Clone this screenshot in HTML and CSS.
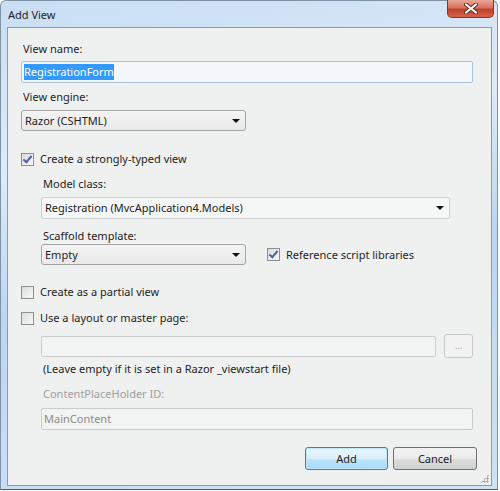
FILE: index.html
```html
<!DOCTYPE html>
<html lang="en">

<head>
    <meta charset="UTF-8">
    <title>Add View</title>
    <link rel="stylesheet" href="styles.css">
</head>

<body>
    <div class="window">

        <div class="titlebar">
            <span class="title">Add View</span>
            <button class="close">
                <svg width="14" height="11" viewBox="0 0 14 11">
                    <path d="M2 1.5 L12 9.5 M12 1.5 L2 9.5" stroke="#5a2a22" stroke-width="4" stroke-linecap="round" />
                    <path d="M2 1.5 L12 9.5 M12 1.5 L2 9.5" stroke="#ffffff" stroke-width="2.2" stroke-linecap="round" />
                </svg>
            </button>
        </div>

        <div class="client">

            <div class="label first">View name:</div>
            <div class="textbox focus name"><span class="selected">RegistrationForm</span></div>

            <div class="label engine">View engine:</div>
            <div class="combo short engineBox">Razor (CSHTML)<span class="arrow"></span></div>

            <label class="check typed">
                <span class="box checked"></span>
                Create a strongly-typed view
            </label>

            <div class="indent">
                <div class="label model">Model class:</div>
                <div class="combo flat modelBox">Registration (MvcApplication4.Models)<span class="arrow"></span></div>

                <div class="label scaffold">Scaffold template:</div>
                <div class="row">
                    <div class="combo short scaffoldBox">Empty<span class="arrow"></span></div>
                    <label class="check refs">
                        <span class="box checked"></span>
                        Reference script libraries
                    </label>
                </div>
            </div>

            <label class="check partial">
                <span class="box"></span>
                Create as a partial view
            </label>

            <label class="check layout">
                <span class="box"></span>
                Use a layout or master page:
            </label>

            <div class="indent">
                <div class="row master">
                    <div class="textbox disabled masterBox"></div>
                    <button class="browse">...</button>
                </div>
                <div class="label hint">(Leave empty if it is set in a Razor _viewstart file)</div>
                <div class="label muted cph">ContentPlaceHolder ID:</div>
                <div class="textbox disabled mainBox">MainContent</div>
            </div>

            <div class="buttons">
                <button class="btn default">Add</button>
                <button class="btn">Cancel</button>
            </div>

            <span class="grip"></span>
        </div>
    </div>
</body>

</html>
```

FILE: styles.css
```css
body {
    margin: 0;
    font-family: 'Noto Sans', 'Open Sans', sans-serif;
    font-size: 11px;
    color: #1e1e1e;
    background: #ffffff;
}

.window {
    width: 498px;
    height: 490px;
    box-sizing: border-box;
    border: 1px solid #7f93a8;
    border-bottom-color: #4d5b6a;
    border-radius: 6px 6px 0 0;
    background: linear-gradient(170deg, #c9def3 0%, #dcebf9 30%, #bcd6f0 55%, #cfe2f6 100%);
}

.titlebar {
    height: 26px;
    display: flex;
    align-items: flex-start;
}

.title {
    margin: 7px 0 0 7px;
    line-height: 14px;
}

.close {
    margin: -1px 3px 0 auto;
    width: 47px;
    height: 18px;
    padding: 0;
    border: 1px solid #8a3224;
    border-top: none;
    border-radius: 0 0 5px 5px;
    background: linear-gradient(#e9a795 0%, #d8735e 45%, #c0412b 55%, #d5624a 100%);
    display: flex;
    align-items: center;
    justify-content: center;
}

.client {
    position: relative;
    margin: 0 6px 0 6px;
    width: 485px;
    height: 459px;
    box-sizing: border-box;
    border: 1px solid #8d9aa8;
    background: #eff0f0;
    padding: 13px 0 0 13px;
}

.label {
    line-height: 16px;
    margin-left: 2px;
}

.first { margin-top: 0; }
.engine { margin-top: 6px; }
.model { margin-top: 9px; }
.scaffold { margin-top: 9px; }
.hint { margin-top: 3px; }
.cph { margin-top: 9px; }

.muted {
    color: #a0a0a0;
}

.textbox {
    box-sizing: border-box;
    height: 22px;
    border: 1px solid #c3c8cd;
    border-radius: 2px;
    background: #f4f5f6;
    line-height: 20px;
    padding-left: 2px;
}

.focus {
    border-color: #a9c3df;
    background: #f3f6fa;
}

.name {
    margin-top: 4px;
    width: 452px;
}

.selected {
    display: inline-block;
    background: #3399ff;
    color: #ffffff;
    line-height: 16px;
}

.disabled {
    border-color: #cbcbcb;
    color: #8c8c8c;
    background: #f2f3f3;
}

.masterBox {
    width: 395px;
    height: 21px;
}

.mainBox {
    margin-top: 6px;
    width: 432px;
}

.combo {
    position: relative;
    box-sizing: border-box;
    height: 21px;
    border: 1px solid #a3a3a3;
    border-radius: 3px;
    background: linear-gradient(#f4f4f4, #e9e9e9);
    line-height: 19px;
    padding-left: 3px;
}

.flat {
    height: 22px;
    line-height: 20px;
    border-color: #cdd0d3;
    border-radius: 2px;
    background: #f5f6f6;
}

.short {
    width: 225px;
}

.engineBox { margin-top: 5px; }

.modelBox {
    margin-top: 5px;
    width: 409px;
}

.scaffoldBox {
    width: 205px;
}

.arrow {
    position: absolute;
    right: 5px;
    top: 8px;
    border-left: 4px solid transparent;
    border-right: 4px solid transparent;
    border-top: 4px solid #111111;
}

.check {
    display: flex;
    align-items: center;
    line-height: 16px;
}

.box {
    width: 13px;
    height: 13px;
    box-sizing: border-box;
    border: 1px solid #8e8f8f;
    background: linear-gradient(135deg, #dcdcdc, #f8f8f8);
    margin-right: 6px;
    position: relative;
}

.checked::after {
    content: "";
    position: absolute;
    left: 3px;
    top: 0px;
    width: 3px;
    height: 7px;
    border-right: 2px solid #4c61a3;
    border-bottom: 2px solid #4c61a3;
    transform: rotate(40deg);
}

.typed { margin-top: 20px; }
.partial { margin-top: 19px; }
.layout { margin-top: 10px; }

.refs {
    margin-left: 21px;
}

.indent {
    margin-left: 20px;
}

.row {
    display: flex;
    align-items: center;
}

.master {
    margin-top: 8px;
}

.browse {
    margin-left: 8px;
    width: 29px;
    height: 24px;
    padding: 0;
    border: 1px solid #c8c8c8;
    border-radius: 3px;
    background: #f2f2f2;
    color: #a0a0a0;
    font-family: inherit;
    font-size: 9px;
    line-height: 16px;
}

.buttons {
    margin-top: 17px;
    padding-right: 14px;
    display: flex;
    justify-content: flex-end;
    gap: 5px;
}

.btn {
    height: 23px;
    width: 84px;
    padding: 0;
    border: 1px solid #707070;
    border-radius: 3px;
    background: linear-gradient(#f2f2f2 0%, #ebebeb 50%, #dddddd 51%, #cfcfcf 100%);
    font-family: inherit;
    font-size: 11px;
    color: #1e1e1e;
}

.default {
    width: 83px;
    border-color: #3c7fb1;
    background: linear-gradient(#eaf6fd 0%, #d9f0fc 50%, #bee6fd 51%, #a7d9f5 100%);
    box-shadow: inset 0 0 0 1px #bfe6fb;
}

.grip {
    position: absolute;
    right: 2px;
    bottom: 2px;
    width: 9px;
    height: 9px;
    background-image: radial-gradient(circle, #9aa3ad 45%, transparent 55%);
    background-size: 3px 3px;
    clip-path: polygon(100% 0, 100% 100%, 0 100%);
}
```
